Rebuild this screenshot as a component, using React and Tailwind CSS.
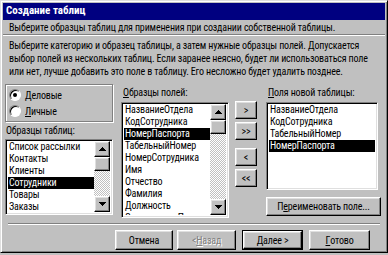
import React from "react";

const btn =
  "border border-t-white border-l-white border-r-black border-b-black shadow-[inset_-1px_-1px_#808080,inset_1px_1px_#dfdfdf] bg-[#c0c0c0] flex items-center justify-center whitespace-nowrap";
const sunken =
  "border border-t-[#808080] border-l-[#808080] border-r-white border-b-white shadow-[inset_1px_1px_#000,inset_-1px_-1px_#dfdfdf]";

function U({ children }) {
  return <span className="underline underline-offset-[1px]">{children}</span>;
}

function ScrollBar() {
  return (
    <div className="w-[16px] h-full shrink-0 flex flex-col bg-[repeating-conic-gradient(#c0c0c0_0_25%,#ffffff_0_50%)] bg-[length:2px_2px]">
      <div className={btn + " w-[16px] h-[16px] shrink-0"}>
        <svg width="7" height="4" viewBox="0 0 7 4"><path d="M3 0h1v1h1v1h1v1h1v1H0V3h1V2h1V1h1z" fill="#000" /></svg>
      </div>
      <div className={btn + " w-[16px] h-[14px] shrink-0"} />
      <div className="flex-1" />
      <div className={btn + " w-[16px] h-[16px] shrink-0"}>
        <svg width="7" height="4" viewBox="0 0 7 4"><path d="M0 0h7v1H6v1H5v1H4v1H3V3H2V2H1V1H0z" fill="#000" /></svg>
      </div>
    </div>
  );
}

function ListBox({ items, sel, className, scroll }) {
  return (
    <div className={sunken + " bg-white px-[2px] pt-[1px] pb-[2px] flex overflow-hidden shrink-0 " + className}>
      <div className="flex-1 min-w-0 flex flex-col overflow-hidden">
        {items.map((it, i) => (
          <div
            key={i}
            className={
              "h-[12px] leading-[12px] shrink-0 pl-[1px] whitespace-nowrap overflow-hidden " +
              (i === sel ? "bg-black text-white" : "text-black")
            }
          >
            {it}
          </div>
        ))}
      </div>
      {scroll && <ScrollBar />}
    </div>
  );
}

function Radio({ on, children }) {
  return (
    <div className="flex items-center h-[16px]">
      <div className="w-[12px] h-[12px] rounded-full bg-white border border-t-[#808080] border-l-[#808080] border-r-white border-b-white shadow-[inset_1px_1px_#000] flex items-center justify-center">
        {on && <div className="w-[4px] h-[4px] rounded-full bg-black" />}
      </div>
      <span className="ml-[4px]">{children}</span>
    </div>
  );
}

export default function App() {
  return (
    <div className="w-[388px] h-[255px] bg-[#c0c0c0] overflow-hidden text-[10px] tracking-[-0.15px] text-black whitespace-nowrap font-['Roboto_Condensed','Liberation_Sans',sans-serif]">
      <div className="w-[388px] h-[253px] border border-t-[#dfdfdf] border-l-[#dfdfdf] border-r-black border-b-black shadow-[inset_1px_1px_#fff,inset_-1px_-1px_#808080] p-[2px] flex flex-col">
        <div className="h-[17px] bg-[#000080] text-white font-bold text-[11px] tracking-normal flex items-center pl-[3px] shrink-0">
          Создание таблиц
        </div>
        <div className="h-[15px] flex items-center pl-[6px] shrink-0 border-b border-b-[#808080] shadow-[0_1px_#fff]">
          Выберите образцы таблиц для применения при создании собственной таблицы.
        </div>
        <div className="mt-[4px] pl-[6px] leading-[13px] shrink-0">
          <div>Выберите категорию и образец таблицы, а затем нужные образцы полей. Допускается</div>
          <div>выбор полей из нескольких таблиц. Если заранее неясно, будет ли использоваться поле</div>
          <div>или нет, лучше добавить это поле в таблицу. Его несложно будет удалить позднее.</div>
        </div>
        <div className="flex items-start mt-[6px] pl-[2px] shrink-0">
          <div className="w-[108px] flex flex-col">
            <div className="h-[38px] border border-[#808080] shadow-[inset_1px_1px_#fff,1px_1px_#fff] flex flex-col justify-center pl-[3px]">
              <Radio on>
                <U>Д</U>еловые
              </Radio>
              <Radio>
                <U>Л</U>ичные
              </Radio>
            </div>
            <div className="mt-[1px] h-[15px] leading-[15px] pl-[1px]">Образцы таблиц:</div>
            <div className="mt-[1px]">
              <ListBox
                className="w-[108px] h-[76px]"
                scroll
                sel={3}
                items={["Список рассылки", "Контакты", "Клиенты", "Сотрудники", "Товары", "Заказы"]}
              />
            </div>
          </div>
          <div className="ml-[8px] w-[108px] flex flex-col">
            <div className="mt-[3px] h-[15px] leading-[12px] pl-[2px]">
              <U>О</U>бразцы полей:
            </div>
            <ListBox
              className="w-[108px] h-[116px]"
              scroll
              sel={2}
              items={[
                "НазваниеОтдела",
                "КодСотрудника",
                "НомерПаспорта",
                "ТабельныйНомер",
                "НомерСотрудника",
                "Имя",
                "Отчество",
                "Фамилия",
                "Должность",
                "ЭлектроннаяПочта",
              ]}
            />
          </div>
          <div className="ml-[6px] mt-[17px] w-[22px] flex flex-col">
            <div className={btn + " h-[18px]"}>&gt;</div>
            <div className={btn + " h-[18px] mt-[3px]"}>&gt;&gt;</div>
            <div className={btn + " h-[18px] mt-[8px]"}>&lt;</div>
            <div className={btn + " h-[18px] mt-[3px]"}>&lt;&lt;</div>
          </div>
          <div className="ml-[9px] w-[115px] flex flex-col">
            <div className="mt-[3px] h-[15px] leading-[12px] pl-[2px]">
              <U>П</U>оля новой таблицы:
            </div>
            <ListBox
              className="w-[112px] h-[88px]"
              sel={3}
              items={["НазваниеОтдела", "КодСотрудника", "ТабельныйНомер", "НомерПаспорта"]}
            />
            <div className={btn + " h-[19px] mt-[7px] w-[115px]"}>
              П<U>е</U>реименовать поле...
            </div>
          </div>
        </div>
        <div className="mt-[5px] mx-[5px] h-[2px] border-t border-t-[#808080] border-b border-b-white shrink-0" />
        <div className="flex mt-[5px] pl-[112px] shrink-0">
          <div className={btn + " w-[58px] h-[20px]"}>Отмена</div>
          <div className={btn + " w-[59px] h-[20px] ml-[4px] text-[#808080] [text-shadow:1px_1px_#fff]"}>
            &lt; <U>Н</U>азад
          </div>
          <div className="ml-[6px] w-[61px] h-[20px] border border-black flex">
            <div className={btn + " flex-1"}>
              <U>Д</U>алее &gt;
            </div>
          </div>
          <div className={btn + " w-[61px] h-[20px] ml-[6px]"}>
            <U>Г</U>отово
          </div>
        </div>
      </div>
    </div>
  );
}
